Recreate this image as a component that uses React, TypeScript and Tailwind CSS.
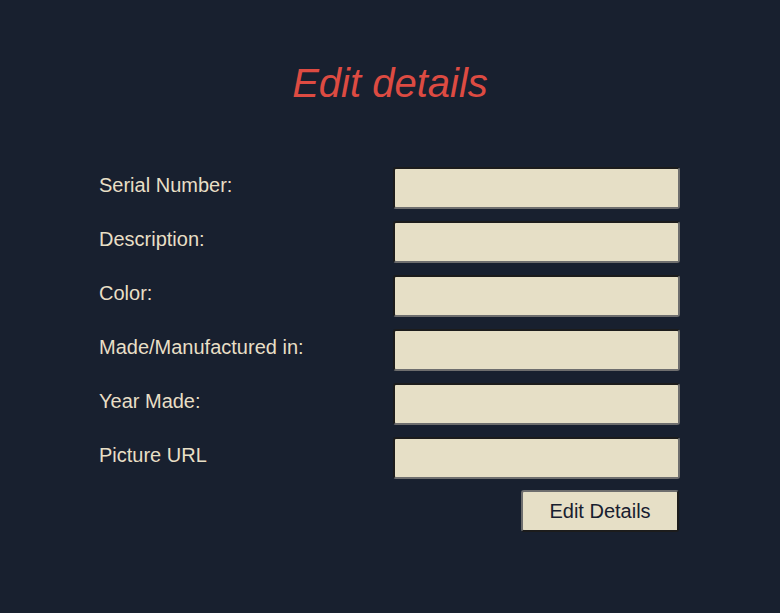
const fields = [
  "Serial Number:",
  "Description:",
  "Color:",
  "Made/Manufactured in:",
  "Year Made:",
  "Picture URL",
];

export default function App() {
  return (
    <div className="flex min-h-screen flex-col items-center bg-[#18202f] font-['Liberation_Sans',Arial,sans-serif]">
      <h1 className="mt-[60px] text-[40px] leading-[46px] italic text-[#dd4b42]">
        Edit details
      </h1>

      <form className="mt-[61px] flex w-[582px] flex-col">
        <div className="grid grid-cols-[294px_288px] gap-y-3">
          {fields.map((label) => (
            <div key={label} className="contents">
              <label className="pt-[7px] text-[20px] leading-[23px] text-[#e8dfc6]">
                {label}
              </label>
              <input
                type="text"
                className="h-[42px] w-[287px] rounded-[3px] border-2 border-t-[#1c1c1c] border-l-[#1c1c1c] border-r-[#6e6e6e] border-b-[#6e6e6e] bg-[#e6dfc6] px-2 text-[18px] text-[#18202f] outline-none"
              />
            </div>
          ))}
        </div>
        <div className="mt-[11px] flex justify-end pr-[2px]">
          <button
            type="button"
            className="h-[42px] w-[158px] rounded-[3px] border-2 border-t-[#6e6e6e] border-l-[#6e6e6e] border-r-[#1c1c1c] border-b-[#1c1c1c] bg-[#e6dfc6] text-[20px] text-[#18202f]"
          >
            Edit Details
          </button>
        </div>
      </form>
    </div>
  );
}
